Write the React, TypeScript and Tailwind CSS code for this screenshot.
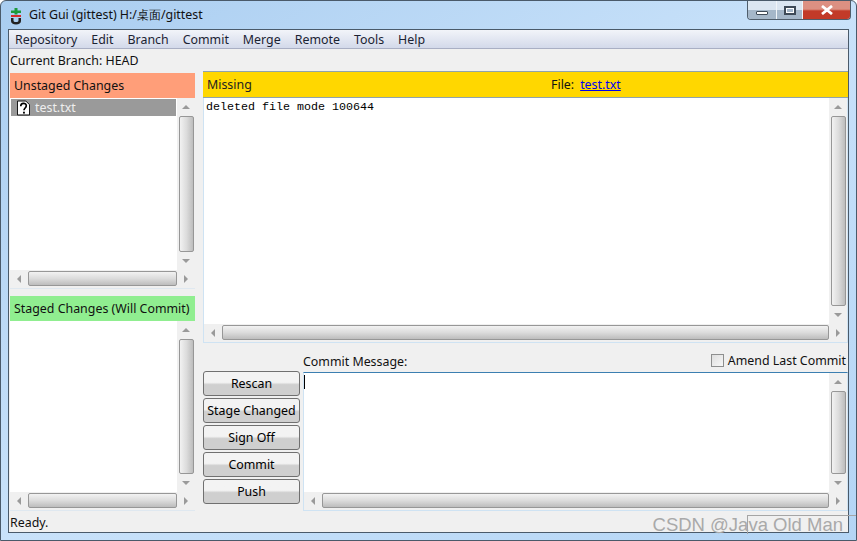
const uiFont = "font-['Noto_Sans','Liberation_Sans',sans-serif]";

function ScrollV() {
  return (
    <div className="flex w-[18px] shrink-0 flex-col bg-[#f0f0f0]">
      <div className="flex h-[18px] shrink-0 items-center justify-center">
        <div className="h-0 w-0 border-x-[4px] border-b-[4px] border-x-transparent border-b-[#9a9a9a]" />
      </div>
      <div className="ml-[2px] mr-px min-h-0 flex-1 rounded-[2px] border border-[#979797] bg-gradient-to-r from-[#f2f2f2] via-[#dcdcdc] to-[#bdbdbd]" />
      <div className="flex h-[18px] shrink-0 items-center justify-center">
        <div className="h-0 w-0 border-x-[4px] border-t-[4px] border-x-transparent border-t-[#9a9a9a]" />
      </div>
    </div>
  );
}

function ScrollH() {
  return (
    <div className="flex h-[18px] shrink-0 bg-[#f0f0f0]">
      <div className="flex w-[18px] shrink-0 items-center justify-center">
        <div className="h-0 w-0 border-y-[4px] border-r-[4px] border-y-transparent border-r-[#9a9a9a]" />
      </div>
      <div className="mb-[2px] mt-px min-w-0 flex-1 rounded-[2px] border border-[#979797] bg-gradient-to-b from-[#f2f2f2] via-[#dcdcdc] to-[#bdbdbd]" />
      <div className="flex w-[18px] shrink-0 items-center justify-center">
        <div className="h-0 w-0 border-y-[4px] border-l-[4px] border-y-transparent border-l-[#9a9a9a]" />
      </div>
    </div>
  );
}

// text area with scrollbars on right and bottom
function ScrollArea({ children, className }: { children?: React.ReactNode; className?: string }) {
  return (
    <div className={`flex min-h-0 flex-1 flex-col ${className ?? ""}`}>
      <div className="flex min-h-0 flex-1">
        <div className="min-w-0 flex-1 bg-white">{children}</div>
        <ScrollV />
      </div>
      <ScrollH />
    </div>
  );
}

function ToolButton({ label }: { label: string }) {
  return (
    <button
      type="button"
      className="flex h-[25px] w-[97px] items-center justify-center rounded-[3px] border border-[#707070] bg-gradient-to-b from-[#f3f3f3] from-45% to-[#cfcfcf] to-55% pt-[2px] text-[12.4px] text-black"
    >
      {label}
    </button>
  );
}

function GitIcon() {
  return (
    <svg width="14" height="18" viewBox="0 0 14 18" className="shrink-0">
      <path d="M5.5 1h3v2.500H12v2.500H8.500v1.500h-3V6H2V3.500h3.500z" fill="#1c9a3c" />
      <rect x="2" y="8" width="10" height="2" fill="#d62c2c" />
      <path d="M2 11h2.500v2.500c0 1 1 1.500 2.500 1.500s2.500-.5 2.500-1.500V11H12v3c0 2-2 3.500-5 3.500S2 16 2 14z" fill="#222" />
    </svg>
  );
}

function FileIcon() {
  return (
    <svg width="13" height="16" viewBox="0 0 14 16" className="shrink-0">
      <path d="M.5.5h9l4 4v11H.5z" fill="#fff" stroke="#000" />
      <path d="M4 6c0-4 6-4 6-.5C10 8 7.500 8 7.500 10.500" fill="none" stroke="#000" strokeWidth="1.800" />
      <rect x="6.500" y="12" width="2" height="2" fill="#000" />
    </svg>
  );
}

export default function App() {
  const menus = ["Repository", "Edit", "Branch", "Commit", "Merge", "Remote", "Tools", "Help"];

  return (
    <div className={`relative flex h-[541px] w-[857px] flex-col overflow-hidden rounded-t-[6px] border border-[#4a5a6a] bg-gradient-to-br from-[#a9cdf0] via-[#c9e2fa] to-[#b4d5f5] text-[12.4px] leading-none text-[#111] ${uiFont}`}>
      {/* title bar */}
      <div className="flex h-[28px] shrink-0 items-start justify-between pl-[8px] pr-[5px]">
        <div className="flex h-[28px] items-center gap-[6px] pt-[1px]">
          <GitIcon />
          <span className="text-[#111]">Git Gui (gittest) H:/桌面/gittest</span>
        </div>
        <div className="flex h-[19px] overflow-hidden rounded-b-[4px] border-x border-b border-[#4f5d6b]">
          <div className="flex w-[28px] items-end justify-center bg-gradient-to-b from-[#dbe6f1] from-50% to-[#a5b7c9] to-50% pb-[4px]">
            <div className="h-[4px] w-[12px] rounded-[1px] border border-[#3e4a57] bg-white" />
          </div>
          <div className="flex w-[27px] items-center justify-center border-x border-[#f1f5f9] bg-gradient-to-b from-[#dbe6f1] from-50% to-[#a5b7c9] to-50%">
            <div className="flex h-[9px] w-[12px] items-center justify-center border-2 border-[#3e4a57] bg-white">
              <div className="h-[3px] w-[6px] bg-[#a5b7c9]" />
            </div>
          </div>
          <div className="flex w-[47px] items-center justify-center bg-gradient-to-b from-[#dc9082] from-45% to-[#c23a28] to-55%">
            <svg width="12" height="10" viewBox="0 0 12 10">
              <path d="M1 1l10 8M11 1L1 9" stroke="#fff" strokeWidth="2.800" />
            </svg>
          </div>
        </div>
      </div>

      {/* client area */}
      <div className="mx-[7px] mb-[7px] flex min-h-0 flex-1 flex-col border border-[#4a5a6a] bg-[#f0f0f0]">
        <div className="flex h-[19px] shrink-0 items-center gap-[14px] border-b border-[#a9afc4] bg-gradient-to-b from-[#f2f4f9] to-[#d3d9ea] pl-[6px] pt-[3px] text-[#1b2333]">
          {menus.map((menu) => (
            <span key={menu}>{menu}</span>
          ))}
        </div>
        <div className="flex h-[22px] shrink-0 items-center pl-px pt-[2px]">Current Branch: HEAD</div>

        <div className="flex min-h-0 flex-1">
          {/* left column */}
          <div className="flex w-[186px] shrink-0 flex-col pl-px">
            <div className="flex h-[218px] shrink-0 flex-col border-b border-[#dfe8f0] pt-[2px]">
              <div className="flex h-[25px] shrink-0 items-center bg-[#ff9e79] pl-[4px] pt-[2px]">Unstaged Changes</div>
              <ScrollArea>
                <div className="mx-px mt-px flex h-[17px] items-center gap-[5px] bg-[#9a9a9a] pl-[6px] text-[#eeeeee]">
                  <FileIcon />
                  <span className="pt-[2px]">test.txt</span>
                </div>
              </ScrollArea>
            </div>
            <div className="mb-px mt-[7px] flex min-h-0 flex-1 flex-col border-b border-[#dfe8f0]">
              <div className="flex h-[25px] shrink-0 items-center whitespace-nowrap bg-[#90ee90] pl-[4px] pt-[2px]">Staged Changes (Will Commit)</div>
              <ScrollArea />
            </div>
          </div>

          {/* right column */}
          <div className="ml-[8px] flex min-w-0 flex-1 flex-col">
            <div className="flex h-[272px] shrink-0 flex-col">
              <div className="flex h-[27px] shrink-0 items-center border-y border-[#8fa3ad] bg-[#ffd700] pl-[4px] pt-[2px]">
                <span className="w-[344px] text-[#222]">Missing</span>
                <span>File:</span>
                <span className="ml-[6px] text-[#0000ee] underline">test.txt</span>
              </div>
              <ScrollArea className="border-x border-b border-[#cfe3f3]">
                <p className="pl-[2px] pt-[4px] font-['Liberation_Mono',monospace] text-[11.67px] text-black">deleted file mode 100644</p>
              </ScrollArea>
            </div>

            <div className="flex min-h-0 flex-1">
              <div className="flex w-[100px] shrink-0 flex-col gap-[2px] pt-[28px]">
                <ToolButton label="Rescan" />
                <ToolButton label="Stage Changed" />
                <ToolButton label="Sign Off" />
                <ToolButton label="Commit" />
                <ToolButton label="Push" />
              </div>
              <div className="flex min-w-0 flex-1 flex-col">
                <div className="flex h-[29px] shrink-0 items-end justify-between pb-[4px] pr-[2px]">
                  <span>Commit Message:</span>
                  <label className="flex items-center gap-[4px]">
                    <span className="mb-px h-[13px] w-[13px] border border-[#8e8f8f] bg-gradient-to-br from-[#dedede] to-[#f8f8f8]" />
                    Amend Last Commit
                  </label>
                </div>
                <div className="mb-px flex min-h-0 flex-1 flex-col border-x border-b border-t border-x-[#cfe3f3] border-b-[#cfe3f3] border-t-[#3c7fb1]">
                  <ScrollArea>
                    <div className="mt-[2px] h-[14px] w-px bg-black" />
                  </ScrollArea>
                </div>
              </div>
            </div>
          </div>
        </div>

        <div className="flex h-[20px] shrink-0 items-center pl-px pt-[2px]">Ready.</div>
      </div>

      {/* watermark over the window */}
      <div className="absolute bottom-[6px] right-0 h-[19px] w-[109px] border-l border-t border-[#a5a5a5]" />
      <div className="absolute bottom-[6px] right-[13px] font-['Liberation_Sans',sans-serif] text-[18.5px] text-[#a9a9a9]">CSDN @Java Old Man</div>
    </div>
  );
}
